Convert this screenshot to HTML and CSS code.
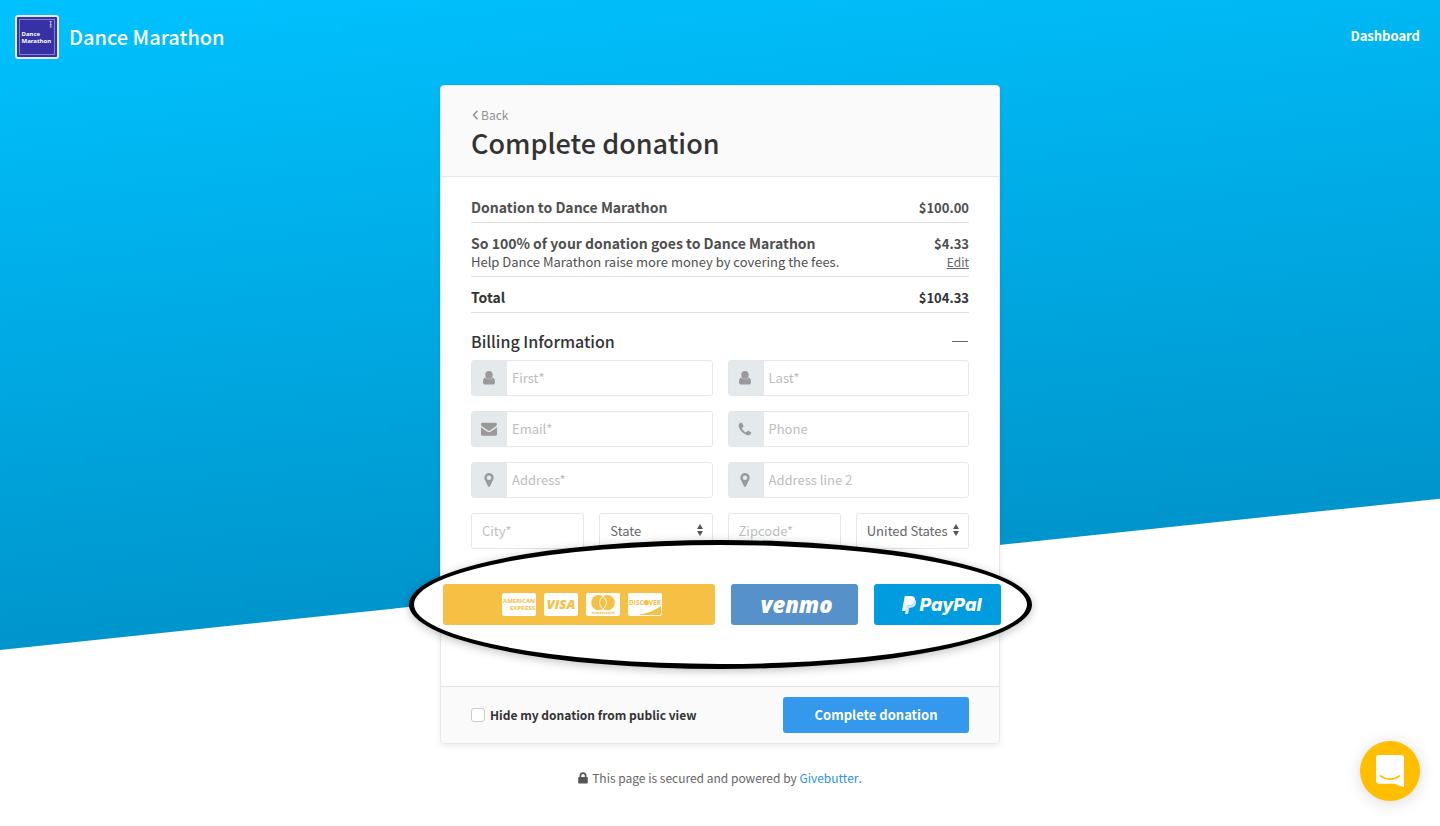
FILE: index.html
```
<!DOCTYPE html>
<html lang="en">
<head>
<meta charset="utf-8">
<title>Dance Marathon</title>
<meta name="viewport" content="width=device-width, initial-scale=1">
<link rel="stylesheet" href="styles.css">
</head>
<body>
<svg class="defs" aria-hidden="true">
  <symbol id="user" viewBox="0 0 16 16"><ellipse cx="8" cy="4.9" rx="3.7" ry="3.9"/><path d="M4.200 7.600C2.500 8.200 2 9.900 2 12.200c0 1.500.9 2.400 2.200 2.400h7.600c1.300 0 2.200-.9 2.200-2.400 0-2.300-.5-4-2.200-4.600C10.800 8.700 9.500 9.300 8 9.300s-2.800-.6-3.800-1.700z"/></symbol>
  <symbol id="mail" viewBox="0 0 16 16"><path d="M0 6.200c1.500 1.300 3.500 2.600 5.300 3.900.8.600 1.700 1.200 2.700 1.200s1.900-.6 2.700-1.200c1.800-1.300 3.800-2.600 5.300-3.900v7.100c0 .8-.6 1.400-1.400 1.400H1.400c-.8 0-1.400-.6-1.400-1.400z"/><path d="M1.400 1.700h13.200c.8 0 1.400.6 1.400 1.400 0 1-.7 2-1.600 2.600L10 8.800c-.6.400-1.300 1-2 1s-1.400-.6-2-1L1.600 5.700C.8 5.200 0 4.100 0 3.200c0-.8.500-1.500 1.400-1.500z"/></symbol>
  <symbol id="phone" viewBox="0 0 16 16"><path d="M14.200 11.400c0 .9-.5 2-1.400 2.500-.8.500-1.900.6-2.900.2C6.200 12.800 3.200 9.800 1.900 6.100 1.500 5.100 1.600 4 2.100 3.200c.5-.9 1.600-1.400 2.500-1.400.3 0 .5.300.8.900l1.200 2.200c.1.500-.1.900-.5 1.200-.5.500-1.100.8-1.100 1.200 0 .5.700 1.500 1.600 2.400s1.900 1.600 2.400 1.600c.4 0 .7-.6 1.200-1.100.3-.4.700-.6 1.200-.5l2.200 1.200c.4.200.6.300.6.500z"/></symbol>
  <symbol id="pin" viewBox="0 0 16 16"><path fill-rule="evenodd" d="M8 1a4.700 4.700 0 0 1 4.700 4.700c0 .7-.1 1.300-.4 1.900L9 14.300c-.4.900-1.600.9-2 0L3.700 7.600c-.3-.6-.4-1.200-.4-1.900A4.700 4.700 0 0 1 8 1zm0 2.400a2.300 2.300 0 1 0 0 4.600 2.300 2.300 0 0 0 0-4.600z"/></symbol>
</svg>
<div class="page">
  <header class="topbar">
    <a class="brand" href="#">
      <svg class="logo" viewBox="0 0 44 44" aria-hidden="true">
        <rect width="44" height="44" rx="3" fill="#e8e6ee"/>
        <rect x="2" y="2" width="40" height="40" rx="1" fill="#3731a6"/>
        <rect x="4.500" y="4.500" width="35" height="35" fill="none" stroke="#8480cb"/>
        <path d="M34.700 6.500h2M35.700 6.500v2.500M34.700 9.500h2M35.700 9.500v2.500M34.700 12h2" stroke="#d9d7f2" stroke-width=".8" fill="none"/>
        <text x="6.500" y="21">Dance</text>
        <text x="6.500" y="28">Marathon</text>
      </svg>
      <span>Dance Marathon</span>
    </a>
    <a class="dashboard" href="#">Dashboard</a>
  </header>

  <main class="card">
    <header class="card-head">
      <a class="back" href="#"><svg viewBox="0 0 8 10" aria-hidden="true"><path d="M6.500 .8 2.500 5l4 4.200"/></svg>Back</a>
      <h1>Complete donation</h1>
    </header>

    <div class="card-body">
      <dl class="summary">
        <div class="line"><dt>Donation to Dance Marathon</dt><dd>$100.00</dd></div>
        <div class="line">
          <dt>So 100% of your donation goes to Dance Marathon<small>Help Dance Marathon raise more money by covering the fees.</small></dt>
          <dd>$4.33<a href="#">Edit</a></dd>
        </div>
        <div class="line total"><dt>Total</dt><dd>$104.33</dd></div>
      </dl>

      <div class="section-title">
        <h2>Billing Information</h2>
        <button class="collapse" type="button" aria-label="Collapse billing information"></button>
      </div>

      <form class="fields" id="billing">
        <div class="field wide"><label for="first"><svg><use href="#user"/></svg></label><input id="first" aria-label="First" placeholder="First*"></div>
        <div class="field wide"><label for="last"><svg><use href="#user"/></svg></label><input id="last" aria-label="Last" placeholder="Last*"></div>
        <div class="field wide"><label for="email"><svg><use href="#mail"/></svg></label><input id="email" aria-label="Email" placeholder="Email*"></div>
        <div class="field wide"><label for="phone-no"><svg><use href="#phone"/></svg></label><input id="phone-no" aria-label="Phone" placeholder="Phone"></div>
        <div class="field wide"><label for="address"><svg><use href="#pin"/></svg></label><input id="address" aria-label="Address" placeholder="Address*"></div>
        <div class="field wide"><label for="address2"><svg><use href="#pin"/></svg></label><input id="address2" aria-label="Address line 2" placeholder="Address line 2"></div>
        <div class="field plain"><input aria-label="City" placeholder="City*"></div>
        <div class="field plain"><select aria-label="State"><option>State</option></select><svg class="arrows" viewBox="0 0 6 12" aria-hidden="true"><path d="M0 5 3 0l3 5zM0 7h6l-3 5z"/></svg></div>
        <div class="field plain"><input aria-label="Zipcode" placeholder="Zipcode*"></div>
        <div class="field plain"><select aria-label="Country"><option>United States</option></select><svg class="arrows" viewBox="0 0 6 12" aria-hidden="true"><path d="M0 5 3 0l3 5zM0 7h6l-3 5z"/></svg></div>
      </form>

      <div class="payments">
        <button class="pay pay-card" type="button" aria-label="Pay by card">
          <svg viewBox="0 0 34 23"><rect width="34" height="23" rx="2"/><text x="1" y="10" font-size="6">AMERICAN</text><text x="33" y="17" font-size="6" text-anchor="end">EXPRESS</text></svg>
          <svg viewBox="0 0 34 23"><rect width="34" height="23" rx="2"/><text class="visa" x="17" y="16" font-size="13" text-anchor="middle">VISA</text></svg>
          <svg viewBox="0 0 34 23"><rect width="34" height="23" rx="2"/><g class="ink"><circle cx="12.800" cy="9.700" r="7.600"/><circle cx="21.200" cy="9.700" r="7.600"/></g><path d="M17 3.400a7.600 7.600 0 0 1 0 12.600 7.600 7.600 0 0 1 0-12.600z" class="lens"/><text x="17" y="21.300" font-size="4" text-anchor="middle">mastercard</text></svg>
          <svg viewBox="0 0 34 23"><rect width="34" height="23" rx="2"/><path class="ink" d="M33 13v9H10c9-1.500 17-4.500 23-9z"/><circle class="ink" cx="18.200" cy="9.800" r="2.700"/><text x="1" y="12" font-size="6.500">DISC</text><text x="20.800" y="12" font-size="6.500">VER</text></svg>
        </button>
        <button class="pay pay-venmo" type="button">venmo</button>
        <button class="pay pay-paypal" type="button">
          <svg viewBox="0 0 14 18" aria-hidden="true"><path fill="#fff" d="M2.800 0h6c3 0 4.700 1.700 4.200 4.600-.6 3.400-3 5.100-6.300 5.100H4.600L3.600 15H0z"/><path fill="#cfe8f8" d="M12.900 3.500c1.100.8 1.400 2.100 1.100 3.700-.6 3-2.700 4.500-5.700 4.500H7.200L6.200 18H3l1.400-8.300h2.400c3.200 0 5.500-1.700 6.100-6.200z"/></svg>PayPal
        </button>
      </div>
    </div>

    <footer class="card-foot">
      <label class="hide"><input type="checkbox">Hide my donation from public view</label>
      <button class="submit" type="submit" form="billing">Complete donation</button>
    </footer>
  </main>

  <p class="secured"><svg viewBox="0 0 10 12" aria-hidden="true"><path fill-rule="evenodd" d="M1.500 5V3.700a3.500 3.500 0 0 1 7 0V5h.3c.6 0 1 .4 1 1v4.500c0 .6-.4 1-1 1H1.200c-.6 0-1-.4-1-1V6c0-.6.4-1 1-1zm1.700 0h3.600V3.700a1.800 1.800 0 0 0-3.600 0z"/></svg>This page is secured and powered by <a href="#">Givebutter</a>.</p>
</div>

<button class="chat" type="button" aria-label="Open chat"><svg viewBox="0 0 28 32" aria-hidden="true"><path fill="#fff" d="M3 0h22a3 3 0 0 1 3 3v29c-3-.6-6-1.800-9-3.200H3a3 3 0 0 1-3-3V3a3 3 0 0 1 3-3z"/><path d="M4.500 20.800c5.500 4.300 13.500 4.300 19 0" fill="none" stroke="#ffbf00" stroke-width="1.700" stroke-linecap="round"/></svg></button>
</body>
</html>
```
FILE: styles.css
```
* { box-sizing: border-box; }
body { margin: 0; background: #fff; color: #333; font: 13px/18px "Noto Sans CJK SC", "Noto Sans", sans-serif; }
a { color: inherit; text-decoration: none; }
button, input, select { font: inherit; color: inherit; margin: 0; }
button { border: 0; cursor: pointer; }
h1, h2, p, dl, dd { margin: 0; }
.defs { display: none; }

.page { position: relative; overflow: hidden; min-height: 100vh; padding-bottom: 38px; }
.page::before {
  content: ""; position: absolute; z-index: -1; inset: 0 0 auto; height: 650px;
  background: linear-gradient(#00c2ff, #0095cc);
  transform: skewY(-6deg); transform-origin: 0 0;
}

.topbar { display: flex; justify-content: space-between; align-items: center; padding: 15px 20px 0 15px; color: #fff; }
.brand { display: flex; align-items: center; gap: 10px; font-size: 20px; line-height: 28px; font-weight: 500; }
.logo { width: 44px; height: 44px; }
.logo text { fill: #fff; font: 700 6px "Noto Sans", sans-serif; }
.dashboard { padding-bottom: 2px; font-weight: 700; }

.card {
  width: 100%; max-width: 560px; margin: 26px auto 0; background: #fff;
  border: 1px solid #e6e8ea; border-radius: 4px; box-shadow: 0 2px 6px rgba(0, 0, 0, .08);
}
.card-head { padding: 20px 30px 14px; background: #fafafa; border-bottom: 1px solid #e6e6e6; border-radius: 3px 3px 0 0; }
.back { display: flex; align-items: center; gap: 2px; font-size: 12px; color: #929292; }
.back svg { width: 8px; height: 10px; fill: none; stroke: #888; stroke-width: 1.3; }
h1 { font-size: 27px; line-height: 38px; font-weight: 500; }
.card-body { position: relative; padding: 13px 30px 137px; }

.line { display: flex; justify-content: space-between; align-items: baseline; padding: 8px 0 5px; border-bottom: 1px solid #e0e0e0; font-size: 14px; line-height: 19px; font-weight: 700; color: #4f4f4f; }
.line + .line { padding-top: 11px; }
.line dd { text-align: right; font-size: 13px; }
.line small, .line dd a { display: block; font-weight: 400; line-height: 18px; }
.line small { font-size: 13px; }
.line dd a { font-size: 12px; text-decoration: underline; color: #666; }
.total { color: #333; }

.section-title { display: flex; justify-content: space-between; align-items: center; padding: 16px 0 7px; }
h2 { font-size: 16px; line-height: 24px; font-weight: 500; }
.collapse { width: 18px; height: 24px; padding: 0; background: linear-gradient(#666, #666) center / 16px 1px no-repeat; }

.fields { display: grid; grid-template-columns: repeat(4, 1fr); gap: 15px; }
.field { position: relative; display: flex; height: 36px; border: 1px solid #e2e8ea; border-radius: 3px; background: #fff; min-width: 0; }
.wide { grid-column: span 2; }
.field label { flex: 0 0 35px; display: flex; align-items: center; justify-content: center; padding-right: 2px; background: #e4eaec; }
.field label svg { width: 16px; height: 16px; fill: #999; }
.field input { flex: 1; min-width: 0; border: 0; outline: 0; padding: 0 5px; background: none; }
.field input::placeholder { color: #bdbdbd; opacity: 1; }
.plain input { padding: 0 10px; }
.field select { flex: 1; min-width: 0; appearance: none; border: 0; outline: 0; background: none; padding: 0 10px; color: #666; }
.arrows { position: absolute; right: 9px; top: 10px; width: 6px; height: 12px; fill: #555; pointer-events: none; }

.payments {
  position: absolute; left: -32px; right: -33px; bottom: 17px; height: 129px;
  display: flex; align-items: center; gap: 16px; padding: 0 26px 0 29px;
  border: 5px solid #000; border-radius: 50%; background: #fff;
  box-shadow: 0 2px 10px rgba(0, 0, 0, .25);
}
.pay { height: 41px; padding: 0; border-radius: 3px; color: #fff; flex: 0 1 127px; display: flex; align-items: center; justify-content: center; }
.pay-card { flex: 1; gap: 8px; padding-left: 6px; background: #f5c043; }
.pay-card svg { width: 34px; height: 23px; fill: #fff; overflow: hidden; }
.pay-card text, .pay-card .ink { fill: #f5c043; }
.pay-card text { font-family: "Open Sans", sans-serif; font-weight: 700; }
.pay-card .visa { font-style: italic; font-weight: 800; }
.pay-card .lens { fill: #f5c043; stroke: #fff; stroke-width: 1; }
.pay-venmo { padding: 0 0 2px 4px; background: #5692c9; font: italic 800 22px/28px "Open Sans", sans-serif; }
.pay-paypal { padding-left: 8px; background: #009ce0; gap: 4px; font: italic 800 18px/24px Inter, sans-serif; }
.pay-paypal svg { width: 14px; height: 18px; }

.card-foot { display: flex; justify-content: space-between; align-items: center; padding: 10px 30px; background: #fafafa; border-top: 1px solid #e6e6e6; border-radius: 0 0 3px 3px; }
.hide { display: flex; align-items: center; gap: 5px; font-size: 12px; font-weight: 700; }
.hide input { appearance: none; width: 14px; height: 14px; border: 1px solid #ccc; border-radius: 3px; background: #fff; }
.submit { width: 186px; height: 36px; padding: 0; border-radius: 3px; background: #3498ec; color: #fff; font-weight: 700; }

.secured { display: flex; justify-content: center; align-items: center; margin-top: 25px; font-size: 12px; color: #666; white-space: pre; }
.secured svg { width: 10px; height: 12px; margin-right: 4px; fill: #555; }
.secured a { color: #2e90e8; }

.chat {
  position: fixed; right: 20px; bottom: 25px; width: 60px; height: 60px; padding: 0; border-radius: 50%;
  display: flex; align-items: center; justify-content: center; background: #ffbf00; box-shadow: 0 2px 16px rgba(0, 0, 0, .15);
}
.chat svg { width: 28px; height: 32px; }
```
